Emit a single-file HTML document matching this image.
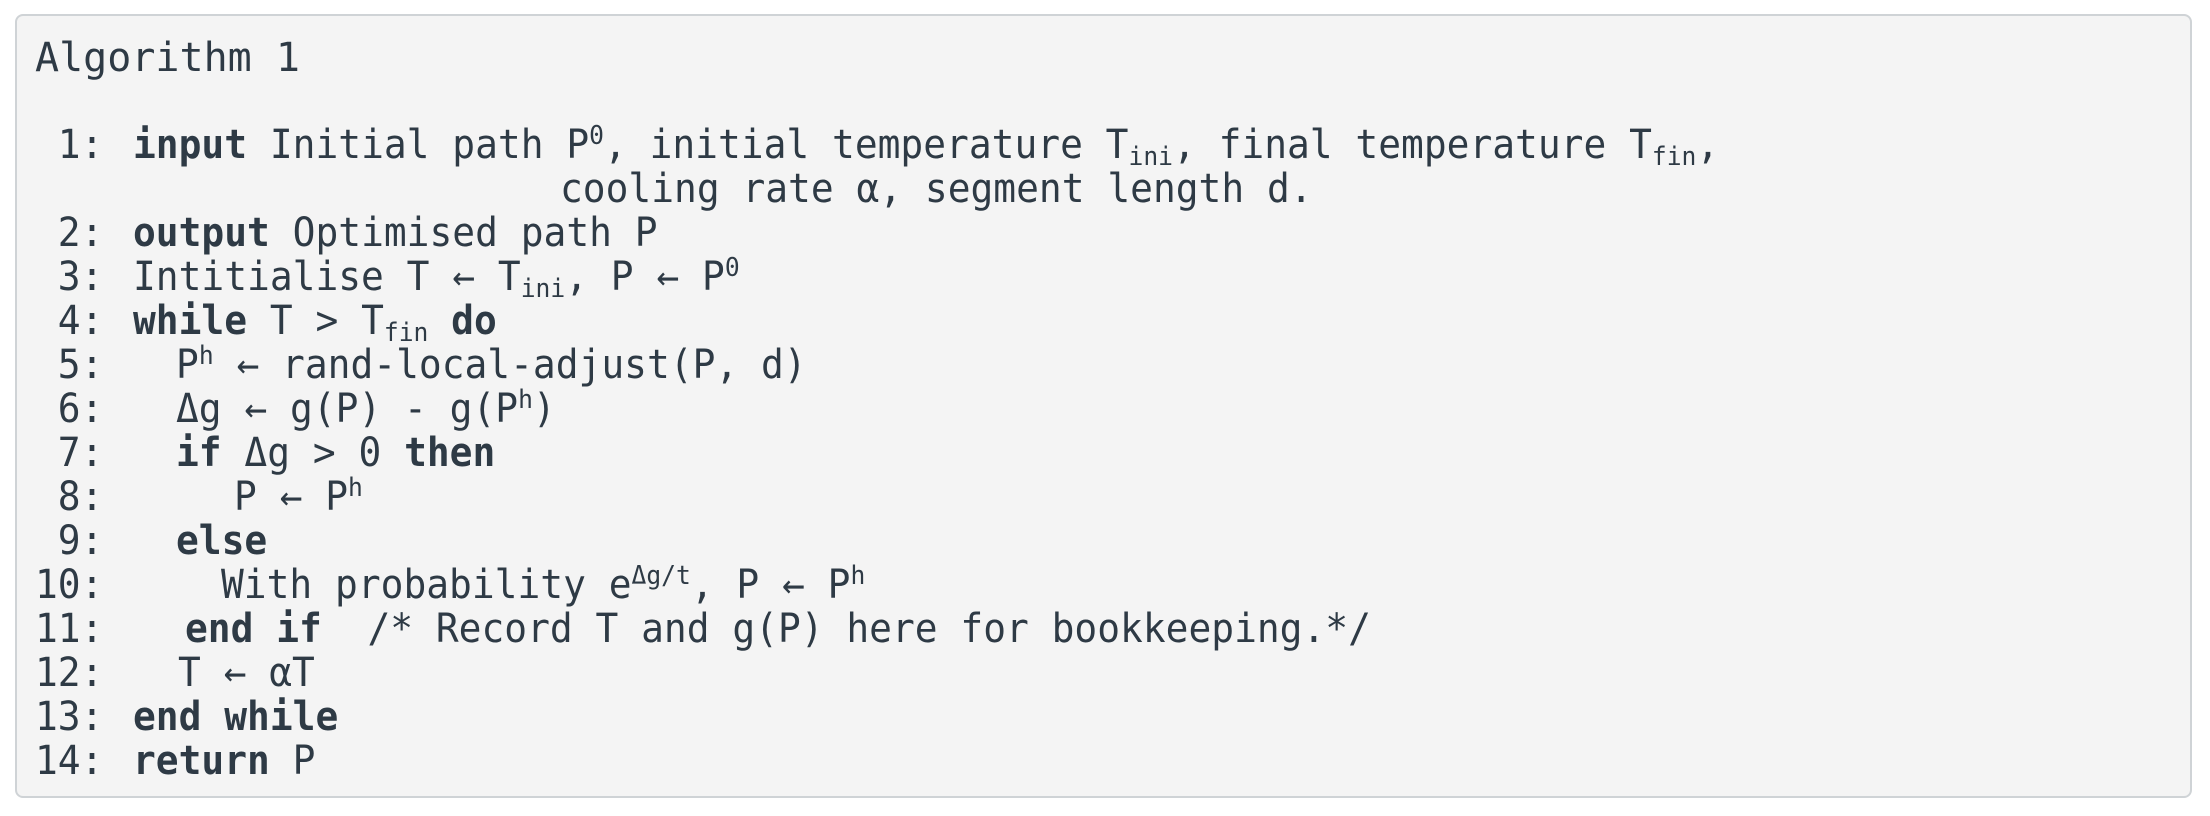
<!DOCTYPE html>
<html><head><meta charset="utf-8">
<style>
html,body{margin:0;padding:0;background:#fff;width:2210px;height:816px;overflow:hidden}
.box{position:absolute;left:15px;top:14px;width:2177px;height:784px;background:#f4f4f4;border:2px solid #cfd3d6;border-radius:8px;box-sizing:border-box}
.l{position:absolute;white-space:pre;font-family:"DejaVu Sans Mono","Liberation Mono",monospace;font-size:40px;line-height:44px;color:#2e3a45;transform:scaleX(0.947);transform-origin:0 0}
.t{transform:none}
b{font-weight:bold}
sub,sup{font-size:26px;line-height:0}
sub{vertical-align:-7px}
sup{vertical-align:14px}
</style></head><body>
<div class="box"></div>
<div class="l t" style="left:35px;top:36px">Algorithm 1</div>
<div class="l" style="left:35px;top:123px"> 1:</div><div class="l" style="left:133px;top:123px"><b>input</b> Initial path P<sup>0</sup>, initial temperature T<sub>ini</sub>, final temperature T<sub>fin</sub>,</div>
<div class="l" style="left:560px;top:167px">cooling rate α, segment length d.</div>
<div class="l" style="left:35px;top:211px"> 2:</div><div class="l" style="left:133px;top:211px"><b>output</b> Optimised path P</div>
<div class="l" style="left:35px;top:255px"> 3:</div><div class="l" style="left:133px;top:255px">Intitialise T ← T<sub>ini</sub>, P ← P<sup>0</sup></div>
<div class="l" style="left:35px;top:299px"> 4:</div><div class="l" style="left:133px;top:299px"><b>while</b> T &gt; T<sub>fin</sub> <b>do</b></div>
<div class="l" style="left:35px;top:343px"> 5:</div><div class="l" style="left:176px;top:343px">P<sup>h</sup> ← rand-local-adjust(P, d)</div>
<div class="l" style="left:35px;top:387px"> 6:</div><div class="l" style="left:176px;top:387px">Δg ← g(P) - g(P<sup>h</sup>)</div>
<div class="l" style="left:35px;top:431px"> 7:</div><div class="l" style="left:176px;top:431px"><b>if</b> Δg &gt; 0 <b>then</b></div>
<div class="l" style="left:35px;top:475px"> 8:</div><div class="l" style="left:234px;top:475px">P ← P<sup>h</sup></div>
<div class="l" style="left:35px;top:519px"> 9:</div><div class="l" style="left:176px;top:519px"><b>else</b></div>
<div class="l" style="left:35px;top:563px">10:</div><div class="l" style="left:221px;top:563px">With probability e<sup>Δg/t</sup>, P ← P<sup>h</sup></div>
<div class="l" style="left:35px;top:607px">11:</div><div class="l" style="left:185px;top:607px"><b>end if</b>  /* Record T and g(P) here for bookkeeping.*/</div>
<div class="l" style="left:35px;top:651px">12:</div><div class="l" style="left:178px;top:651px">T ← αT</div>
<div class="l" style="left:35px;top:695px">13:</div><div class="l" style="left:133px;top:695px"><b>end while</b></div>
<div class="l" style="left:35px;top:739px">14:</div><div class="l" style="left:133px;top:739px"><b>return</b> P</div>
</body></html>
